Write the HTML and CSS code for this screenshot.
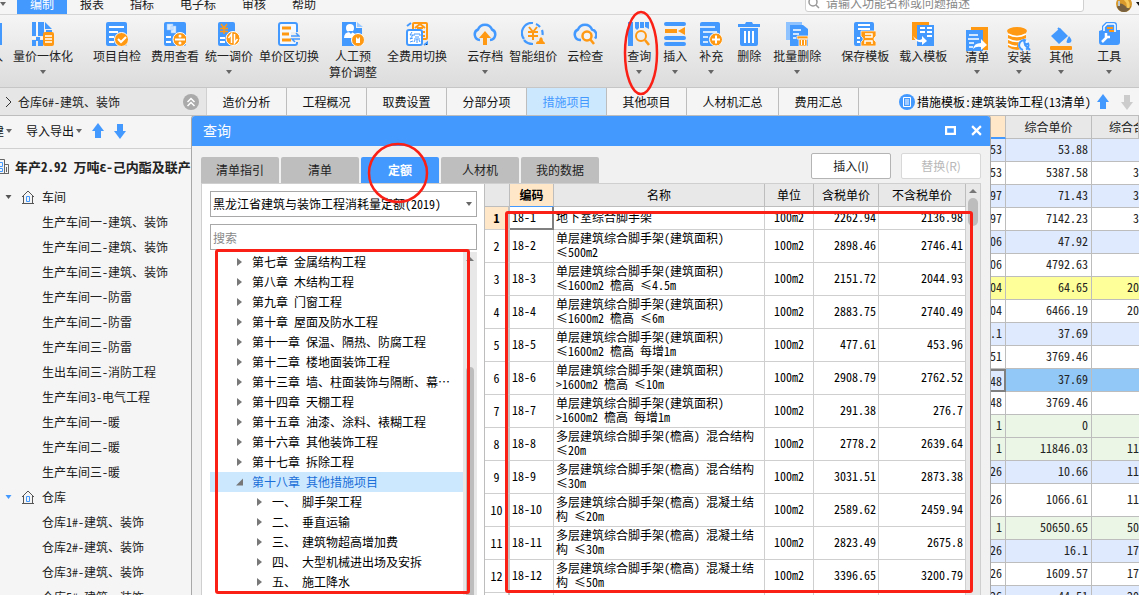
FILE: index.html
```html
<!DOCTYPE html>
<html lang="zh-CN">
<head>
<meta charset="utf-8">
<title>计价软件</title>
<link rel="stylesheet" href="styles.css">
</head>
<body>
<svg class="defs" aria-hidden="true">
  <symbol id="down" viewBox="0 0 6 4"><path d="M0 0h6L3 4z"/></symbol>
  <symbol id="right" viewBox="0 0 5 8"><path d="M0 0l5 4-5 4z"/></symbol>
  <symbol id="corner" viewBox="0 0 7 7"><path d="M7 0v7H0z"/></symbol>
  <symbol id="arrow-up" viewBox="0 0 12 16"><path d="M6 0l6 8H9v7H3V8H0z"/></symbol>
  <symbol id="arrow-down" viewBox="0 0 12 16"><path d="M6 16L0 8h3V1h6v7h3z"/></symbol>
  <symbol id="house" viewBox="0 0 14 14"><path d="M1 7l6-6 6 6M2.500 6v7M11.500 6v7M1 13.500h12" fill="none" stroke="#555"/><path d="M5.500 6.500h3v5h-3z" fill="none" stroke="#4499ff"/></symbol>
</svg>

<header class="menubar">
  <nav class="menus">
    <button class="quick" aria-label="快速访问"><svg class="caret"><use href="#down"/></svg></button>
    <button class="menu on">编制</button><button class="menu">报表</button><button class="menu">指标</button><button class="menu">电子标</button><button class="menu">审核</button><button class="menu">帮助</button>
  </nav>
  <label class="finder"><svg class="glass" viewBox="0 0 12 12"><circle cx="5" cy="5" r="4" fill="none" stroke="#999" stroke-width="1.500"/><path d="M8 8l3 3" stroke="#999" stroke-width="1.500"/></svg><input type="text" placeholder="请输入功能名称或问题描述" aria-label="搜索功能"></label>
  <button class="user" aria-label="用户"><svg class="avatar" viewBox="0 0 16 16"><circle cx="8" cy="8" r="8" fill="#d99a2b"/><path d="M1 11q3-6 7-2t7 1q-2 6-7 6t-7-5z" fill="#76603f"/><path d="M9 3q4 3 3 9" stroke="#f7c85a" stroke-width="3" fill="none"/><path d="M3 5v5" stroke="#bcc8d0" stroke-width="2"/></svg><svg class="caret dark"><use href="#down"/></svg></button>
</header>

<div class="toolbar">
  <button class="tool first"><svg class="icon" viewBox="0 0 22 24"><path fill="#4499ff" d="M2 1h20v22H2z"/></svg><span>导入</span></button>
  <button class="tool s10"><svg class="icon" viewBox="0 0 22 24"><path fill="#4499ff" d="M0 0h4v14H0zM6 0h6v14H6zM13 0l7 7h-7zM14 8h6v3h-6zM0 18h4v6H0zM6 18h5v6H6z"/><path fill="#4499ff" d="M4 15h4v4H4z"/><path d="M5 0v14M0 16h4M9 16h3" stroke="#fff"/><rect x="11" y="10" width="11" height="14" rx="2" fill="#ff9913"/><path d="M13 14h7M13 17h7M13 20h7" stroke="#fff" stroke-width="1.500"/></svg><span>量价一体化</span><svg class="caret"><use href="#down"/></svg></button>
  <button class="tool s20"><svg class="icon" viewBox="0 0 22 24"><rect width="21" height="24" rx="2" fill="#4499ff"/><path d="M3 5h15M3 10h9M3 15h5M3 20h5" stroke="#fff" stroke-width="2"/><circle cx="15.500" cy="17.500" r="7" fill="#ff9913" stroke="#fff"/><path d="M12 17l3 3 5-5" fill="none" stroke="#fff" stroke-width="2"/></svg><span>项目自检</span></button>
  <button class="tool s10"><svg class="icon" viewBox="0 0 22 24"><rect width="22" height="24" rx="2" fill="#4499ff"/><path d="M3 2h6v6H3zM7 4h5v7H7z" fill="#dcecff" stroke="#8fc3ff" stroke-width=".5"/><path d="M2 15h5M2 20h5" stroke="#fff" stroke-width="2"/><circle cx="16" cy="17.500" r="7" fill="#ff9913" stroke="#fff"/><path d="M11 17.500h10" stroke="#fff" stroke-width="2"/><circle cx="16" cy="14" r="1.500" fill="#fff"/><circle cx="16" cy="21" r="1.500" fill="#fff"/></svg><span>费用查看</span></button>
  <button class="tool s6"><svg class="icon" viewBox="0 0 22 24"><rect width="17" height="24" rx="2" fill="#4499ff"/><path d="M3 2l3 4 3-4M6 6v6M2 6.500h8M2 9.500h8" stroke="#ff9913" stroke-width="1.500" fill="none"/><path d="M2 16h5M2 20h5" stroke="#fff" stroke-width="2"/><circle cx="15" cy="16.500" r="7" fill="#ff9913" stroke="#fff"/><path d="M13.500 21v-9l-3 4M16.500 12v9l3-4" stroke="#fff" stroke-width="1.500" fill="none"/></svg><span>统一调价</span><svg class="caret"><use href="#down"/></svg></button>
  <button class="tool s6"><svg class="icon" viewBox="0 0 22 24"><rect x="1" y="1" width="18" height="22" rx="2" fill="#f4f9ff" stroke="#4499ff" stroke-width="2"/><path d="M4 6h9M4 12h7M4 18h9" stroke="#ff9913" stroke-width="3"/><path d="M13 10h9v10h-9z" fill="#eee"/><path d="M13 14h8l-3-3M22 17h-8l3 3" fill="none" stroke="#4499ff" stroke-width="1.500"/></svg><span>单价区切换</span></button>
  <button class="tool s10"><svg class="icon" viewBox="0 0 22 24"><path fill="#4499ff" d="M0 0h14v6h6v18H0z"/><path d="M15 0l6 5h-6z" fill="#9dcbff"/><circle cx="8" cy="6" r="4" fill="#fff"/><path d="M2 16q0-6 6-6t6 6z" fill="#fff"/><path d="M6 9h5l-2 3z" fill="#4499ff"/><circle cx="16" cy="18" r="6.500" fill="#ff9913" stroke="#fff"/><path d="M14 15l2 2 2-2v6h-4z" fill="#fff"/></svg><span>人工预<br>算价调整</span></button>
  <button class="tool s10"><svg class="icon" viewBox="0 0 22 24"><rect x="7" y="1" width="14" height="16" rx="1" fill="none" stroke="#ff9913" stroke-width="2"/><path d="M9 6l5-4 5 4M11 6h6M15 10h4M15 14h4" stroke="#ff9913" stroke-width="2" fill="none"/><path d="M1 4l4-3M18 23l4-3v3" stroke="#4499ff" stroke-width="2"/><rect x="1" y="8" width="15" height="15" rx="2" fill="#fff" stroke="#4499ff" stroke-width="2"/><path d="M6 10l-2 3h3l-3 4 3-1M4 20l3-1M8 14v-2h6v2M9 15h4M8 17h6M11 17v4M9 18l-1 2M13 18l1 2" stroke="#4499ff" fill="none"/></svg><span>全费用切换</span></button>
  <button class="tool s20"><svg class="icon wide" viewBox="0 0 24 24"><path d="M7 18a5.500 5.500 0 01-2-10.500 7.500 7.500 0 0114 0A5.500 5.500 0 0117 18" fill="none" stroke="#4499ff" stroke-width="2.500"/><path d="M12 9l6 7h-4v7h-4v-7H6z" fill="#ff9913"/></svg><span>云存档</span><svg class="caret"><use href="#down"/></svg></button>
  <button class="tool s6"><svg class="icon wide" viewBox="0 0 24 24"><path d="M3 17A10 10 0 0112 1M15 2a10 10 0 014 3M21 8a10 10 0 01.500 5M3 18q3 4 9 4" fill="none" stroke="#4499ff" stroke-width="2.200"/><path d="M8 5l4 5 4-5M12 10v8M7 10h10M7 14h10" fill="none" stroke="#ff9913" stroke-width="2"/><path d="M15 22q0-3 3-3 0-3 2-4 2 1 2 4 2 1 2 3z" fill="#ff9913"/></svg><span>智能组价</span></button>
  <button class="tool s10"><svg class="icon wide" viewBox="0 0 24 24"><path d="M8 18H7A5.500 5.500 0 015 7.500a7.500 7.500 0 0114 0 5.500 5.500 0 013 9" fill="none" stroke="#4499ff" stroke-width="2.500"/><circle cx="14" cy="14" r="4.500" fill="#f4f4f4" stroke="#ff9913" stroke-width="2.500"/><path d="M17 17l4 5" stroke="#ff9913" stroke-width="2.500"/></svg><span>云检查</span></button>
  <button class="tool s24 marked"><svg class="icon" viewBox="0 0 22 24"><path d="M0 0h5v24H0zM7 0h4v6L9 8 7 6zM12 0h4v6h-4zM17 0h4v7l-4-2z" fill="#4499ff"/><circle cx="13" cy="14" r="5" fill="none" stroke="#ff9913" stroke-width="2"/><path d="M17 18l4 5" stroke="#ff9913" stroke-width="2.500"/></svg><span>查询</span><svg class="caret"><use href="#down"/></svg>
    <svg class="mark-ellipse" viewBox="0 0 36 86"><ellipse cx="18" cy="43" rx="16" ry="41"/></svg></button>
  <button class="tool s12"><svg class="icon" viewBox="0 0 22 24"><path d="M2 2h18M2 16h18M2 22h18" stroke="#4499ff" stroke-width="4" stroke-linecap="round"/><path d="M1 9h12" stroke="#ff9913" stroke-width="4"/><path d="M14 9l7-4v8z" fill="#ff9913"/></svg><span>插入</span><svg class="caret"><use href="#down"/></svg></button>
  <button class="tool s12"><svg class="icon" viewBox="0 0 22 24"><rect width="20" height="24" rx="2" fill="#4499ff"/><path d="M0 5h15M3 10h14M3 15h5M3 20h5" stroke="#fff" stroke-width="1.500"/><circle cx="16" cy="17.500" r="6.500" fill="#ff9913" stroke="#fff"/><path d="M12 17.500h8M16 13.500v8" stroke="#fff" stroke-width="2"/></svg><span>补充</span><svg class="caret"><use href="#down"/></svg></button>
  <button class="tool s14"><svg class="icon" viewBox="0 0 22 24"><path d="M0 2h7l1-2h6l1 2h7v3H0zM2 6h18v16q0 2-2 2H4q-2 0-2-2z" fill="#4499ff"/><path d="M7 9v12M11 9v12M15 9v12" stroke="#fff" stroke-width="2"/></svg><span>删除</span></button>
  <button class="tool s12"><svg class="icon" viewBox="0 0 22 24"><path d="M0 0h16v18H0z" fill="#8fc3ff"/><path d="M4 3h13l5 4v17H4z" fill="#4499ff"/><path d="M7 8h8M7 12h6M7 16h3" stroke="#fff" stroke-width="1.500"/><path d="M11 14h11v3H11zM13 17h8v7h-8z" fill="#ff9913" stroke="#fff" stroke-width=".7"/><path d="M15.500 18v5M18.500 18v5" stroke="#fff"/></svg><span>批量删除</span><svg class="caret"><use href="#down"/></svg></button>
  <button class="tool s20"><svg class="icon" viewBox="0 0 22 24"><rect width="20" height="24" rx="2" fill="#4499ff"/><path d="M4 3h12M4 7h12M3 16h3M3 20h3" stroke="#fff" stroke-width="2"/><path d="M7 9h15v5l-2 2v2l2 2v4H7v-4l2-2v-2l-2-2z" fill="#ff9913" stroke="#fff" stroke-width=".7"/><path d="M11 12h7v3h-7M11 22v-3h7v3" fill="none" stroke="#fff" stroke-width="1.500"/></svg><span>保存模板</span></button>
  <button class="tool s10"><svg class="icon" viewBox="0 0 22 24"><path d="M0 0h17v18H0z" fill="#ff9913"/><path d="M5 3h17v21H5z" fill="#4499ff"/><path d="M8 6h5M15 6h5M8 10h5M15 10h5M15 14h5" stroke="#fff" stroke-width="2"/><path d="M1 14q5 6 9 3v-3l5 5-5 4v-3q-6 1-9-6z" fill="#fff"/></svg><span>载入模板</span></button>
  <button class="tool s18 low"><svg class="icon" viewBox="0 0 22 24"><path d="M5 0h17v23H5z" fill="#ff9913"/><path d="M0 3h17v21H0z" fill="#4499ff"/><path d="M3 8h9M2 12h11M3 16h5M3 20h4" stroke="#fff" stroke-width="1.500"/><path d="M7 22q1-6 8-6v-4l6 6-6 5v-3q-5-1-8 2z" fill="#fff"/></svg><span>清单</span><svg class="caret"><use href="#down"/></svg></button>
  <button class="tool s18 low"><svg class="icon wide" viewBox="0 0 24 24"><path d="M1 4v16q9 6 18 0V4z" fill="#ff9913"/><ellipse cx="10" cy="4" rx="10" ry="4" fill="#ff9913"/><path d="M1 7q9 5 18 0M1 12q9 5 18 0M1 17q5 3 9 2" stroke="#fff" stroke-width="1.500" fill="none"/><circle cx="17" cy="18" r="6" fill="#f1f8ff"/><path d="M19 13.500a5 5 0 10-3 9.500M21 16a5 5 0 01-2 6.500M17 13.500l1 4 4-1M18 18l5 5" stroke="#4499ff" stroke-width="2" fill="none"/></svg><span>安装</span><svg class="caret"><use href="#down"/></svg></button>
  <button class="tool s18 low"><svg class="icon" viewBox="0 0 22 24"><path d="M10 1l8 8-9 8-8-8z" fill="#4499ff"/><path d="M8 1l3 3" stroke="#4499ff" stroke-width="2"/><path d="M19 9q5 6 0 7t0-7z" fill="#4499ff"/><rect y="19" width="22" height="4" rx="1" fill="#ff9913"/></svg><span>其他</span><svg class="caret"><use href="#down"/></svg></button>
  <button class="tool s24"><svg class="icon" viewBox="0 0 22 24"><path d="M8 0h8q3 0 3 3v5h3v12q0 3-3 3H4q-3 0-3-3V9l3-1V4z" fill="#4499ff"/><path d="M6 9V5l3-3h7l1 1v7" fill="none" stroke="#fff" stroke-width="1.500"/><path d="M9 6h6M11 9h5" stroke="#ff9913" stroke-width="2"/><path d="M4 20l5-5M8 11v4h4" stroke="#fff" stroke-width="2.500" fill="none"/></svg><span>工具</span><svg class="caret"><use href="#down"/></svg></button>
</div>

<div class="crumbs">
  <div class="path"><svg class="chev" viewBox="0 0 6 10"><path d="M0 0l5 5-5 5" fill="none" stroke="#333"/></svg><span class="path-text">仓库6#-建筑、装饰</span><button class="fold" aria-label="收起"><svg viewBox="0 0 16 16"><circle cx="8" cy="8" r="8" fill="#aaa"/><path d="M4.500 8L8 4.500 11.500 8M4.500 12L8 8.500l3.500 3.500" fill="none" stroke="#fff" stroke-width="1.500"/></svg></button></div>
  <nav class="pages"><button>造价分析</button><button>工程概况</button><button>取费设置</button><button>分部分项</button><button class="on">措施项目</button><button>其他项目</button><button class="long">人材机汇总</button><button>费用汇总</button></nav>
  <div class="template"><svg class="tpl" viewBox="0 0 16 16"><circle cx="8" cy="8" r="8" fill="#4499ff"/><path d="M4.500 3.500h7v9h-7zM6 6h4M6 8h4M6 10h4" fill="none" stroke="#fff"/></svg><span>措施模板:建筑装饰工程(13清单)</span><button aria-label="上移"><svg class="move"><use href="#arrow-up"/></svg></button><button class="off" aria-label="下移"><svg class="move"><use href="#arrow-down"/></svg></button></div>
</div>

<main class="work">
  <aside class="side">
    <div class="side-tools"><button class="new">新建<svg class="caret"><use href="#down"/></svg></button><button>导入导出<svg class="caret"><use href="#down"/></svg></button><button aria-label="上移"><svg class="move"><use href="#arrow-up"/></svg></button><button aria-label="下移"><svg class="move"><use href="#arrow-down"/></svg></button></div>
    <h1 class="project"><svg class="building" viewBox="3 0 9 16"><path d="M2 .5h5.500v14H2M7.500 5.500h4v9h-4M2 14.500h10M9.500 8v5" fill="none" stroke="#666"/><path d="M2 3.500h3.500v4H2M2 9.500h3.500v3H2" fill="none" stroke="#4499ff"/></svg><span>年产2.92 万吨ε-己内酯及联产</span></h1>
    <ul class="units">
      <li class="group"><svg class="open"><use href="#down"/></svg><svg class="home"><use href="#house"/></svg>车间</li>
      <li>生产车间一-建筑、装饰</li><li>生产车间二-建筑、装饰</li><li>生产车间三-建筑、装饰</li><li>生产车间一-防雷</li><li>生产车间二-防雷</li><li>生产车间三-防雷</li><li>生出车间三-消防工程</li><li>生产车间3-电气工程</li><li>生产车间一-暖</li><li>生产车间二-暖</li><li>生产车间三-暖</li>
      <li class="group"><svg class="open blue"><use href="#down"/></svg><svg class="home"><use href="#house"/></svg>仓库</li>
      <li>仓库1#-建筑、装饰</li><li>仓库2#-建筑、装饰</li><li>仓库3#-建筑、装饰</li><li>仓库5#-建筑、装饰</li>
    </ul>
  </aside>

  <section class="sheet">
    <table class="prices">
      <colgroup><col><col class="c-price"><col class="c-total"></colgroup>
      <thead><tr><th class="hot"></th><th>综合单价</th><th class="last">综合合价</th></tr></thead>
      <tbody>
        <tr class="b"><td>53</td><td>53.88</td><td></td></tr>
        <tr><td>53</td><td>5387.58</td><td>3</td></tr>
        <tr class="b"><td>97</td><td>71.43</td><td>3</td></tr>
        <tr><td>97</td><td>7142.23</td><td>3</td></tr>
        <tr class="b"><td>06</td><td>47.92</td><td></td></tr>
        <tr><td>06</td><td>4792.63</td><td></td></tr>
        <tr class="y"><td>04</td><td>64.65</td><td>20</td></tr>
        <tr><td>04</td><td>6466.19</td><td>20</td></tr>
        <tr class="b"><td>.1</td><td>37.69</td><td></td></tr>
        <tr><td>51</td><td>3769.46</td><td></td></tr>
        <tr class="sel"><td>48</td><td>37.69</td><td></td></tr>
        <tr><td>48</td><td>3769.46</td><td></td></tr>
        <tr class="g"><td>1</td><td>0</td><td></td></tr>
        <tr class="g"><td>1</td><td>11846.03</td><td>11</td></tr>
        <tr class="b"><td>26</td><td>10.66</td><td>11</td></tr>
        <tr class="tall"><td>26</td><td>1066.61</td><td>11</td></tr>
        <tr class="g"><td>1</td><td>50650.65</td><td>50</td></tr>
        <tr class="b"><td>26</td><td>16.1</td><td>17</td></tr>
        <tr><td>26</td><td>1609.57</td><td>17</td></tr>
        <tr class="b"><td>26</td><td>44.51</td><td>20</td></tr>
      </tbody>
    </table>
  </section>

  <div class="dialog" role="dialog" aria-label="查询">
    <div class="titlebar"><h2>查询</h2><button aria-label="最大化"><svg viewBox="0 0 10 10"><path d="M1 2h8v6H1z" fill="none" stroke="#fff" stroke-width="2"/></svg></button><button aria-label="关闭"><svg viewBox="0 0 10 10"><path d="M1 1l8 8M9 1L1 9" stroke="#fff" stroke-width="2"/></svg></button></div>
    <div class="strip">
      <nav class="kinds"><button>清单指引</button><button>清单</button><button class="on">定额<svg class="mark-circle" viewBox="0 0 62 62"><circle cx="31" cy="31" r="29"/></svg></button><button>人材机</button><button>我的数据</button></nav>
      <div class="actions"><button>插入(I)</button><button disabled>替换(R)</button></div>
    </div>
    <div class="panes">
      <div class="left">
        <div class="pick"><select aria-label="定额库"><option>黑龙江省建筑与装饰工程消耗量定额(2019)</option></select><svg class="caret"><use href="#down"/></svg></div>
        <input class="query" type="text" placeholder="搜索" aria-label="搜索">
        <div class="browser">
          <ul class="chapters">
            <li><svg class="tw"><use href="#right"/></svg>第七章 金属结构工程</li>
            <li><svg class="tw"><use href="#right"/></svg>第八章 木结构工程</li>
            <li><svg class="tw"><use href="#right"/></svg>第九章 门窗工程</li>
            <li><svg class="tw"><use href="#right"/></svg>第十章 屋面及防水工程</li>
            <li><svg class="tw"><use href="#right"/></svg>第十一章 保温、隔热、防腐工程</li>
            <li><svg class="tw"><use href="#right"/></svg>第十二章 楼地面装饰工程</li>
            <li><svg class="tw"><use href="#right"/></svg>第十三章 墙、柱面装饰与隔断、幕…</li>
            <li><svg class="tw"><use href="#right"/></svg>第十四章 天棚工程</li>
            <li><svg class="tw"><use href="#right"/></svg>第十五章 油漆、涂料、裱糊工程</li>
            <li><svg class="tw"><use href="#right"/></svg>第十六章 其他装饰工程</li>
            <li><svg class="tw"><use href="#right"/></svg>第十七章 拆除工程</li>
            <li class="current"><svg class="tw"><use href="#corner"/></svg>第十八章 其他措施项目</li>
            <li class="sub"><svg class="tw"><use href="#right"/></svg>一、 脚手架工程</li>
            <li class="sub"><svg class="tw"><use href="#right"/></svg>二、 垂直运输</li>
            <li class="sub"><svg class="tw"><use href="#right"/></svg>三、 建筑物超高增加费</li>
            <li class="sub"><svg class="tw"><use href="#right"/></svg>四、 大型机械进出场及安拆</li>
            <li class="sub"><svg class="tw"><use href="#right"/></svg>五、 施工降水</li>
          </ul>
          <div class="scroll tree-scroll"><svg class="up" viewBox="0 0 8 4"><path d="M0 4h8L4 0z"/></svg><span class="thumb"></span></div>
        </div>
        <span class="mark-box tree-box"></span>
      </div>
      <div class="right">
        <table class="quota">
          <colgroup><col class="q-no"><col class="q-code"><col><col class="q-unit"><col class="q-tax"><col class="q-net"></colgroup>
          <thead><tr><th></th><th class="hot">编码</th><th>名称</th><th>单位</th><th>含税单价</th><th>不含税单价</th></tr></thead>
          <tbody>
            <tr class="cut"><th>1</th><td>18-1</td><td>地下室综合脚手架</td><td>100m2</td><td>2262.94</td><td>2136.98</td></tr>
            <tr><th>2</th><td>18-2</td><td>单层建筑综合脚手架(建筑面积)<br>≤500m2</td><td>100m2</td><td>2898.46</td><td>2746.41</td></tr>
            <tr><th>3</th><td>18-3</td><td>单层建筑综合脚手架(建筑面积)<br>≤1600m2 檐高 ≤4.5m</td><td>100m2</td><td>2151.72</td><td>2044.93</td></tr>
            <tr><th>4</th><td>18-4</td><td>单层建筑综合脚手架(建筑面积)<br>≤1600m2 檐高 ≤6m</td><td>100m2</td><td>2883.75</td><td>2740.49</td></tr>
            <tr><th>5</th><td>18-5</td><td>单层建筑综合脚手架(建筑面积)<br>≤1600m2 檐高 每增1m</td><td>100m2</td><td>477.61</td><td>453.96</td></tr>
            <tr><th>6</th><td>18-6</td><td>单层建筑综合脚手架(建筑面积)<br>&gt;1600m2 檐高 ≤10m</td><td>100m2</td><td>2908.79</td><td>2762.52</td></tr>
            <tr><th>7</th><td>18-7</td><td>单层建筑综合脚手架(建筑面积)<br>&gt;1600m2 檐高 每增1m</td><td>100m2</td><td>291.38</td><td>276.7</td></tr>
            <tr><th>8</th><td>18-8</td><td>多层建筑综合脚手架(檐高) 混合结构<br>≤20m</td><td>100m2</td><td>2778.2</td><td>2639.64</td></tr>
            <tr><th>9</th><td>18-9</td><td>多层建筑综合脚手架(檐高) 混合结构<br>≤30m</td><td>100m2</td><td>3031.51</td><td>2873.38</td></tr>
            <tr><th>10</th><td>18-10</td><td>多层建筑综合脚手架(檐高) 混凝土结<br>构 ≤20m</td><td>100m2</td><td>2589.62</td><td>2459.94</td></tr>
            <tr><th>11</th><td>18-11</td><td>多层建筑综合脚手架(檐高) 混凝土结<br>构 ≤30m</td><td>100m2</td><td>2823.49</td><td>2675.8</td></tr>
            <tr><th>12</th><td>18-12</td><td>多层建筑综合脚手架(檐高) 混凝土结<br>构 ≤50m</td><td>100m2</td><td>3396.65</td><td>3200.79</td></tr>
            <tr><th></th><td></td><td></td><td></td><td></td><td></td></tr>
          </tbody>
        </table>
        <div class="scroll grid-scroll"><svg class="up" viewBox="0 0 8 4"><path d="M0 4h8L4 0z"/></svg><span class="thumb"></span></div>
        <span class="mark-box grid-box"></span>
      </div>
    </div>
  </div>
</main>
</body>
</html>
```
FILE: styles.css
```css
* { box-sizing: border-box; }
html, body { height: 100%; }
body {
  margin: 0;
  display: flex;
  flex-direction: column;
  overflow: hidden;
  background: #f5f5f5;
  color: #222;
  font: 12px/16px "Noto Sans Mono CJK SC", "Noto Sans CJK SC", sans-serif;
}
button, input, select { font: inherit; color: inherit; }
button { border: 0; padding: 0; background: none; white-space: nowrap; }
ul { list-style: none; margin: 0; padding: 0; }
h1, h2 { margin: 0; }
svg { display: block; flex: none; }
.defs { position: absolute; width: 0; height: 0; }
.caret { width: 6px; height: 4px; fill: #666; }
.caret.dark { fill: #111; }
.move { width: 12px; height: 16px; fill: #4499ff; }
.off .move { fill: #ccc; }

/* menu bar */
.menubar {
  flex: none;
  display: flex;
  align-items: flex-end;
  height: 15px;
  overflow: hidden;
  border-bottom: 1px solid #d6d6d6;
  font-family: "Noto Sans CJK SC", sans-serif;
}
.menus { display: flex; flex: 1; align-items: flex-end; }
.quick { width: 17px; height: 20px; display: flex; align-items: center; }
.menu { height: 20px; padding: 0 13px; line-height: 20px; }
.menu.on { background: #4499ff; color: #fff; }
.finder {
  display: flex;
  align-items: center;
  gap: 6px;
  width: 279px;
  height: 18px;
  margin: 0 32px 2px 0;
  padding: 0 2px;
  border: 1px solid #d0d0d0;
  border-radius: 3px;
  background: #fff;
}
.glass { width: 12px; height: 12px; }
.finder input { flex: 1; min-width: 0; border: 0; padding: 0; background: none; outline: 0; }
input::placeholder { color: #888; opacity: 1; }
.user { display: flex; align-items: center; gap: 4px; height: 20px; margin-right: -3px; }
.avatar { width: 16px; height: 16px; }

/* toolbar */
.toolbar {
  flex: none;
  display: flex;
  align-items: flex-start;
  height: 73px;
  padding-top: 7px;
  background: linear-gradient(#f5f5f5, #dcdcdc);
  border-bottom: 1px solid #c6c6c6;
  font-family: "Noto Sans CJK SC", sans-serif;
}
.tool { display: flex; flex-direction: column; align-items: center; flex: none; color: #222; }
.tool span { margin-top: 2px; }
.tool .icon { width: 22px; height: 24px; }
.tool .icon.wide { width: 24px; }
.tool .caret { margin-top: 6px; }
.tool.low { padding-top: 5px; }
.tool.low span { margin-top: -2px; }
.tool.low .caret { margin-top: 5px; }
.first { margin-left: -21px; }
.s6 { margin-left: 6px; }
.s10 { margin-left: 10px; }
.s12 { margin-left: 12px; }
.s14 { margin-left: 14px; }
.s18 { margin-left: 18px; }
.s20 { margin-left: 20px; }
.s24 { margin-left: 24px; }
.marked { position: relative; }

/* hand-drawn highlights */
.mark-ellipse, .mark-circle { position: absolute; z-index: 5; fill: none; stroke: #fb2015; stroke-width: 2.5px; pointer-events: none; }
.toolbar .mark-ellipse { left: -4px; top: -12px; width: 36px; height: 86px; }
.mark-circle { left: 6px; top: -15px; width: 62px; height: 62px; }
.mark-box { position: absolute; z-index: 4; border: 3px solid #fb2015; border-radius: 3px; pointer-events: none; }

/* path and page tabs */
.crumbs { flex: none; display: flex; height: 28px; border-bottom: 1px solid #bdbdbd; }
.path { display: flex; align-items: center; width: 207px; padding: 0 7px 0 6px; background: #e6e6e6; border-right: 1px solid #d0d0d0; }
.chev { width: 6px; height: 10px; }
.path-text { flex: 1; margin-left: 6px; }
.fold svg, .tpl { width: 16px; height: 16px; }
.pages { display: flex; flex: 1; font-family: "Noto Sans CJK SC", sans-serif; }
.pages button { width: 80px; border-right: 1px solid #bdbdbd; color: #111; }
.pages .long { width: 92px; }
.pages .on { background: #cce8ff; color: #4499ff; }
.template { display: flex; align-items: center; color: #000; white-space: nowrap; }
.template span { margin-left: 2px; }
.template button { width: 24px; display: flex; justify-content: center; }

/* work area */
.work { position: relative; flex: 1; min-height: 0; display: flex; overflow: hidden; }
.side { width: 206px; flex: none; overflow: hidden; white-space: nowrap; }
.side-tools { display: flex; align-items: center; height: 33px; gap: 10px; padding-bottom: 2px; border-bottom: 1px solid #d0d0d0; font-family: "Noto Sans CJK SC", sans-serif; }
.side-tools button { display: flex; align-items: center; gap: 2px; color: #111; }
.side-tools .new { margin: 0 4px 0 -20px; }
.project { display: flex; align-items: center; gap: 6px; height: 36px; font-size: 13px; }
.building { width: 9px; height: 16px; }
.units li { display: flex; align-items: center; height: 25px; padding: 0 0 2px 42px; }
.units .group { padding-left: 5px; }
.open { width: 7px; height: 4px; margin-right: 9px; fill: #555; }
.open.blue { fill: #4499ff; }
.home { width: 14px; height: 14px; margin-right: 7px; }

.sheet { flex: 1; overflow: hidden; background: #fff; }
table { border-collapse: separate; border-spacing: 0; table-layout: fixed; }
td, th { padding: 0 3px; white-space: nowrap; overflow: hidden; }
.prices { width: 100%; line-height: 16px; }
.c-price { width: 86px; }
.c-total { width: 47px; }
.prices th { height: 23px; background: #e8e8e8; font-weight: 400; border-right: 1px solid #bdbdbd; border-bottom: 1px solid #bdbdbd; }
.prices th.hot { background: #ffe7c8; border-bottom: 2px solid #4499ff; }
.prices th.last { text-align: left; padding-left: 17px; }
.prices td { height: 23px; padding-bottom: 2px; text-align: right; border-right: 1px solid #bdbdbd; border-bottom: 1px solid #bdbdbd; }
.prices td:last-child { padding: 0 0 2px; border-right: 0; }
.prices .tall td { height: 33px; }
.b td { background: #dfeaff; }
.y td { background: #ffff99; }
.g td { background: #ecf6e6; }
.sel td { background: #92c8f8; }
.prices .sel td:first-child { background: #dfeaff; border: 2px solid #808080; padding: 0 2px 0 0; }

/* query dialog */
.dialog {
  position: absolute;
  left: 191px;
  top: -1px;
  bottom: 0;
  width: 800px;
  display: flex;
  flex-direction: column;
  background: #f1f1f1;
  border: 1px solid #a8a8a8;
  border-bottom: 0;
  border-radius: 4px 4px 0 0;
  color: #000;
}
.titlebar { flex: none; display: flex; align-items: center; gap: 15px; height: 30px; padding: 0 8px 2px 11px; background: #4499ff; color: #fff; border-radius: 3px 3px 0 0; }
.titlebar h2 { flex: 1; font-size: 14px; font-weight: 400; line-height: 20px; }
.titlebar svg { width: 11px; height: 11px; }
.strip { flex: none; display: flex; justify-content: space-between; align-items: flex-end; height: 37px; padding: 0 9px; }
.kinds { display: flex; gap: 2px; }
.kinds button { position: relative; width: 78px; height: 26px; background: #bebebe; color: #222; border-radius: 2px 2px 0 0; }
.kinds .on { background: #4499ff; color: #fff; font-weight: 700; }
.actions { display: flex; gap: 10px; padding-bottom: 4px; font-family: "Noto Sans CJK SC", sans-serif; }
.actions button { width: 80px; height: 26px; background: #fff; border: 1px solid #b4b4b4; border-radius: 2px; color: #222; }
.actions button:disabled { border-color: #d8d8d8; color: #b8b8b8; }
.panes { flex: 1; min-height: 0; display: flex; margin: 0 9px; border: 1px solid #cfcfcf; border-bottom: 0; background: #fff; }
.left { position: relative; width: 282px; flex: none; display: flex; flex-direction: column; padding: 7px 7px 0 8px; }
.pick { position: relative; height: 26px; margin-bottom: 7px; }
.pick select { width: 100%; height: 100%; appearance: none; background: #fff; border: 1px solid #a8a8a8; border-radius: 0; padding: 0 0 0 2px; color: #000; }
.pick .caret { position: absolute; right: 5px; top: 11px; }
.query { flex: none; height: 26px; border: 1px solid #a8a8a8; padding: 0 2px; outline: 0; }
.browser { flex: 1; min-height: 0; display: flex; margin-top: 2px; overflow: hidden; }
.chapters { flex: 1; }
.chapters li { display: flex; align-items: center; height: 20px; padding-left: 26px; white-space: nowrap; }
.chapters .sub { padding-left: 46px; }
.chapters .current { background: #cce8ff; color: #1a6fd8; }
.tw { width: 7px; height: 8px; margin-right: 9px; fill: #777; }
.scroll { flex: none; width: 14px; display: flex; flex-direction: column; align-items: center; background: #e8e8e8; }
.scroll .up { width: 8px; height: 4px; fill: #777; margin-top: 5px; }
.thumb { width: 10px; border-radius: 5px; background: #bdbdbd; }
.tree-scroll .thumb { flex: 1; width: 8px; margin-top: 106px; border-radius: 4px 4px 0 0; }
.tree-box { left: 13px; right: 14px; top: 65px; bottom: 1px; }
.right { position: relative; flex: 1; min-width: 0; display: flex; align-items: stretch; overflow: hidden; border-left: 1px solid #bdbdbd; }
.quota { flex: 1; min-width: 0; align-self: flex-start; line-height: 14px; }
.q-no { width: 25px; }
.q-code { width: 44px; }
.q-unit { width: 49px; }
.q-tax { width: 65px; }
.q-net { width: 87px; }
.quota th, .quota td { border-right: 1px solid #cfcfcf; border-bottom: 1px solid #cfcfcf; font-weight: 400; }
.quota thead th { height: 23px; background: #e8e8e8; border-color: #bdbdbd; }
.quota thead .hot { background: #ffe7c8; font-weight: 700; border-bottom-color: #4499ff; }
.quota tbody th { border-right: 2px solid #c4c4c4; padding: 0; }
.quota td { height: 33px; padding: 0 2px 2px; }
.quota td:nth-child(4) { text-align: center; }
.quota td:nth-child(n+5) { text-align: right; }
.quota .cut td { height: 23px; }
.quota .cut th { background: #ffe7c8; font-weight: 700; }
.quota .cut td:nth-child(2) { border-right: 2px solid #808080; border-bottom: 2px solid #808080; }
.grid-scroll .thumb { height: 28px; margin-top: 5px; }
.grid-box { left: 20px; right: 7px; top: 27px; bottom: 2px; }
```
